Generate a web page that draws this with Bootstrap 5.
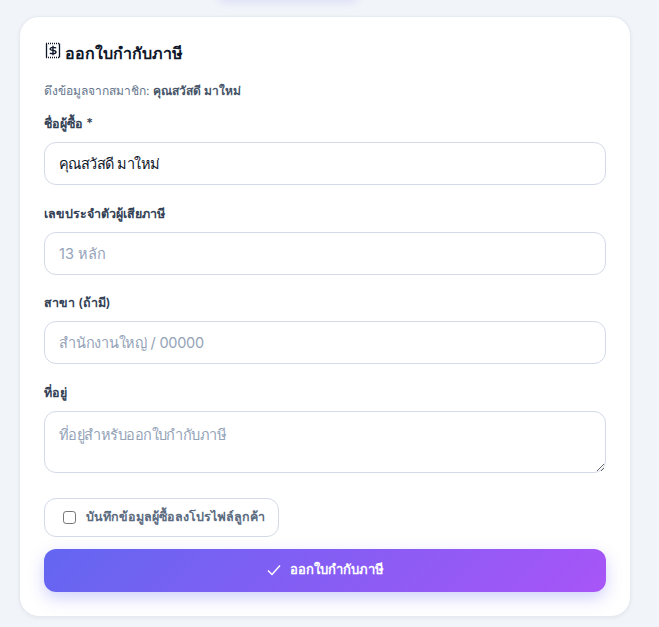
<!DOCTYPE html>
<html lang="th"><head><meta charset="utf-8">
<link rel="stylesheet" href="https://cdn.jsdelivr.net/npm/bootstrap@5.3.0/dist/css/bootstrap.min.css">
<style>
html,body{height:100%;overflow:hidden}
body{background:#f1f4f9;font-family:Inter,"Noto Sans",sans-serif;color:#0f172a;position:relative}
.top-glow{position:absolute;top:-10px;left:219px;width:138px;height:10px;border-radius:8px;box-shadow:0 2px 8px rgba(99,102,241,.16)}
.tax-panel{margin:16px 0 0 19px;width:612px;background:#fff;border:1px solid #e6eaf1;border-radius:20px;padding:24px;box-shadow:0 1px 4px rgba(15,23,42,.06)}
.tax-title{font-size:16px;font-weight:700;line-height:24px;margin:0 0 16px}
.tax-icon{margin:-5px 0 0 1px;flex:none}
.tax-sub{font-size:12px;color:#64748b;line-height:20px;margin-bottom:13px}
.tax-sub b{color:#475569}
.tax-label{font-size:12.5px;font-weight:600;color:#334155;line-height:20px;margin-bottom:8px;display:block}
.tax-field{border:1px solid #d3d9e6;border-radius:12px;height:43px;font-size:14.5px;padding:8px 14px;color:#0f172a;box-shadow:none}
.tax-field::placeholder{color:#94a3b8}
.tax-tight{letter-spacing:-.55px}
.tax-snug{letter-spacing:-.25px}
textarea.tax-field{height:62px;resize:vertical;padding-top:12px}
.tax-group{margin-bottom:18.5px}
.tax-check{border:1px solid #d3d9e6;border-radius:12px;height:39px;width:235px;padding:0 18px;font-size:12.5px;font-weight:600;color:#5b6b80;margin-top:25px;white-space:nowrap;gap:10px}
.tax-check input{width:13px;height:13px;margin:0;border-color:#767676;border-radius:2.500px;flex:none}
.tax-btn{background:linear-gradient(135deg,#6366f1,#a855f7);border:0;border-radius:12px;height:43px;margin-top:12px;font-size:13px;font-weight:700;color:#fff;box-shadow:0 6px 16px rgba(99,102,241,.3)}
</style></head><body>
<div class="top-glow"></div>
<div class="tax-panel">
<h2 class="tax-title d-flex align-items-center gap-1"><svg class="tax-icon" width="16" height="18" viewBox="0 0 16 18" fill="none" stroke="#0f172a"><path d="M1.500 1.500v14M14.500 1.500v14" stroke-width="1.300"/><path d="M1 1.500h14M1 15.500h14" stroke-width="1.400" stroke-dasharray="1 1"/><path d="M11 6.200C10.400 5 5.200 4.900 5.200 6.900S11 7.800 11 9.900 5.700 12 5 10.800M8 3.800v9.400" stroke-width="1.400"/></svg><span>ออกใบกำกับภาษี</span></h2>
<div class="tax-sub">ดึงข้อมูลจากสมาชิก: <b>คุณสวัสดี มาใหม่</b></div>
<div class="tax-group"><label class="tax-label">ชื่อผู้ซื้อ *</label><input class="form-control tax-field tax-tight" value="คุณสวัสดี มาใหม่"></div>
<div class="tax-group"><label class="tax-label">เลขประจำตัวผู้เสียภาษี</label><input class="form-control tax-field" placeholder="13 หลัก"></div>
<div class="tax-group"><label class="tax-label">สาขา (ถ้ามี)</label><input class="form-control tax-field tax-snug" placeholder="สำนักงานใหญ่ / 00000"></div>
<div><label class="tax-label">ที่อยู่</label><textarea class="form-control tax-field tax-tight" placeholder="ที่อยู่สำหรับออกใบกำกับภาษี"></textarea></div>
<label class="tax-check d-flex align-items-center"><input type="checkbox" class="form-check-input"><span>บันทึกข้อมูลผู้ซื้อลงโปรไฟล์ลูกค้า</span></label>
<button class="btn tax-btn w-100 d-flex align-items-center justify-content-center gap-2"><svg width="16" height="16" viewBox="0 0 16 16" fill="none" stroke="#fff" stroke-width="1.5"><path d="M2 8.500 6 12.500 14 3.500"/></svg><span>ออกใบกำกับภาษี</span></button>
</div>
</body></html>
